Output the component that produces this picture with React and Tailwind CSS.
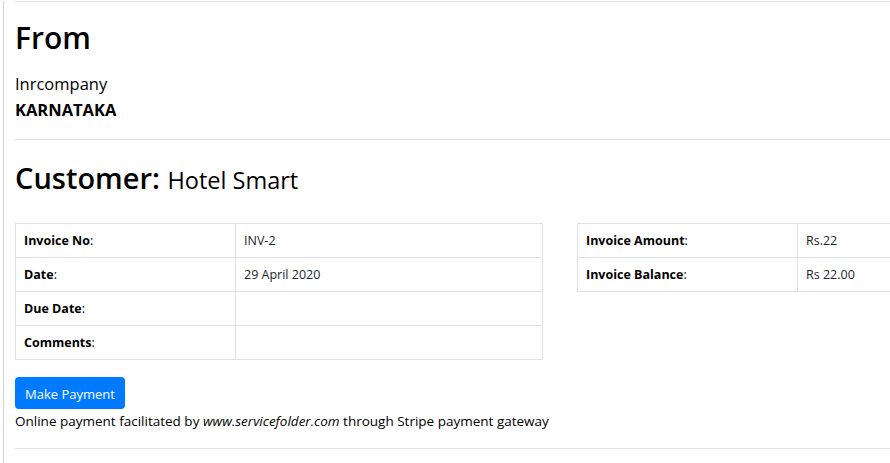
export default function App() {
  const left = [
    ["Invoice No", "INV-2"],
    ["Date", "29 April 2020"],
    ["Due Date", ""],
    ["Comments", ""],
  ];
  const right = [
    ["Invoice Amount", "Rs.22"],
    ["Invoice Balance", "Rs 22.00"],
  ];

  return (
    <div
      className="min-h-[463px] w-[890px] overflow-hidden bg-white text-[#212529]"
      style={{ fontFamily: '"Open Sans", "Noto Sans", sans-serif' }}
    >
      <div className="ml-[3px] min-h-[463px] border-l border-[#d4d4d4] pl-[11px]">
        <div className="h-px mt-px bg-[#e3e3e3] w-[900px]" />

        {/* ---- From ---- */}
        <h2 className="mt-[17px] text-[30px] leading-[38px] font-semibold text-black">From</h2>
        <p className="mt-[15px] text-[16.5px] leading-[24px] text-black">Inrcompany</p>
        <p className="mt-[2px] text-[16.5px] leading-[24px] font-bold text-black">KARNATAKA</p>
        <div className="h-px mt-[17px] bg-[#e3e3e3] w-[900px]" />

        {/* ---- Customer ---- */}
        <h2 className="mt-[19px] text-[29px] leading-[38px] font-semibold text-black">
          Customer: <span className="text-[23.5px] font-normal">Hotel Smart</span>
        </h2>

        {/* ---- Invoice tables ---- */}
        <div className="mt-[24px] flex items-start gap-[34px]">
          <table className="w-[528px] shrink-0 border-collapse text-[12.5px]">
            <tbody>
              {left.map(([k, v]) => (
                <tr key={k} className="h-[34px]">
                  <td className="w-[220px] border border-[#dee2e6] px-2 pt-[2px] font-bold text-black">
                    {k}<span className="font-normal">:</span>
                  </td>
                  <td className="border border-[#dee2e6] px-2 pt-[2px]">{v}</td>
                </tr>
              ))}
            </tbody>
          </table>
          <table className="w-[330px] shrink-0 border-collapse text-[12.5px]">
            <tbody>
              {right.map(([k, v]) => (
                <tr key={k} className="h-[34px]">
                  <td className="w-[220px] border border-[#dee2e6] px-2 pt-[2px] font-bold text-black">
                    {k}<span className="font-normal">:</span>
                  </td>
                  <td className="border border-[#dee2e6] px-2 pt-[2px]">{v}</td>
                </tr>
              ))}
            </tbody>
          </table>
        </div>

        {/* ---- Payment ---- */}
        <button className="mt-[17px] h-[32px] rounded-[4px] bg-[#007bff] px-[10px] pt-[3px] text-[13px] text-white">
          Make Payment
        </button>
        <p className="mt-[2px] text-[13.5px] leading-[20px] text-black">
          Online payment facilitated by <i>www.servicefolder.com</i> through Stripe payment gateway
        </p>
        <div className="h-px mt-[17px] bg-[#e3e3e3] w-[900px]" />
      </div>
    </div>
  );
}
